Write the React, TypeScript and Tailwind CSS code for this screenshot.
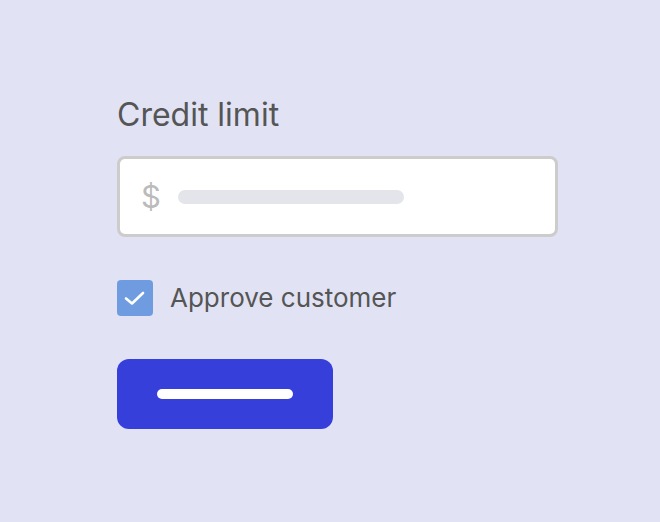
export default function App() {
  return (
    <div className="w-[660px] h-[522px] bg-[#e1e3f4] flex flex-col pl-[117px] pt-[95px]" style={{ fontFamily: "Inter, 'Liberation Sans', sans-serif" }}>
      <div className="text-[32px] leading-[40px] text-[#555555] h-[40px]">Credit limit</div>
      <div className="mt-[21px] w-[441px] h-[81px] border-[3px] border-[#cccccc] rounded-[8px] bg-white flex items-center pl-[21px]">
        <span className="text-[31px] leading-none text-[#bbbbbb] w-[37px]">$</span>
        <div className="w-[226px] h-[14px] rounded-full bg-[#e3e5ea]"></div>
      </div>
      <div className="mt-[43px] flex items-center">
        <div className="w-[36px] h-[36px] rounded-[4px] bg-[#6f9ce0]">
          <svg width="36" height="36" viewBox="0 0 36 36" fill="none">
            <path d="M9 18.5 L15 23.5 L26 13" stroke="white" strokeWidth="2.6" strokeLinecap="round" strokeLinejoin="round" />
          </svg>
        </div>
        <span className="ml-[17px] text-[26px] leading-none text-[#555555]">Approve customer</span>
      </div>
      <div className="mt-[43px] w-[216px] h-[70px] rounded-[12px] bg-[#373fdb] flex items-center justify-center">
        <div className="w-[136px] h-[10px] rounded-full bg-white"></div>
      </div>
    </div>
  );
}
